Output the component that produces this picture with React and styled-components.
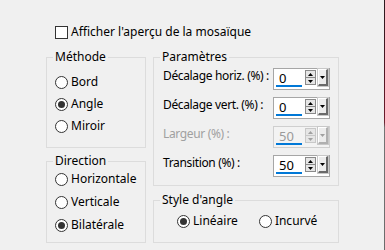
import styled, { createGlobalStyle } from 'styled-components';

const GlobalStyle = createGlobalStyle`
  html, body {
    margin: 0;
    padding: 0;
    background: #f0f0f0;
  }
  body {
    font-family: "Noto Sans", "Open Sans", sans-serif;
    font-size: 12px;
    line-height: 16px;
    color: #000;
  }
`;

const Page = styled.div`
  display: flex;
  width: 385px;
  height: 250px;
  overflow: hidden;
`;

const Dialog = styled.div`
  width: 384px;
  padding: 24px 0 0 46px;
  box-sizing: border-box;
`;

// thin slice of the window behind, visible at the right edge
const EdgeStrip = styled.div`
  width: 1px;
  background: linear-gradient(to bottom, #2a1a1e 0, #4e1622 28%, #6a1b2b 46%, #6d2733 49%, #747474 51%, #6c6c6c 100%);
`;

const CheckRow = styled.label`
  display: flex;
  align-items: center;
  gap: 3px;
  padding-left: 9px;
  height: 16px;
  margin-bottom: 9px;
`;

const CheckBox = styled.span`
  width: 13px;
  height: 13px;
  box-sizing: border-box;
  border: 1px solid #333;
  background: #fff;
`;

const Columns = styled.div`
  display: flex;
  gap: 7px;
  align-items: flex-start;
`;

const Column = styled.div`
  display: flex;
  flex-direction: column;
  gap: ${p => p.$gap}px;
  width: ${p => p.$width}px;
`;

const Group = styled.fieldset`
  margin: 0;
  padding: 0;
  border: 1px solid #dcdcdc;
  min-width: 0;
`;

const Legend = styled.legend`
  margin-left: 6px;
  padding: 0 2px;
  line-height: 16px;
`;

const GroupBody = styled.div`
  display: flex;
  flex-direction: ${p => (p.$row ? 'row' : 'column')};
  gap: ${p => p.$gap || 0}px;
  padding: ${p => p.$pad};
`;

const Option = styled.label`
  display: flex;
  align-items: center;
  gap: 3px;
  height: 16px;
  white-space: nowrap;
`;

const RadioCircle = styled.span`
  width: 13px;
  height: 13px;
  box-sizing: border-box;
  border: 1px solid #333;
  border-radius: 50%;
  background: #fff;
  display: grid;
  place-items: center;
`;

const RadioDot = styled.span`
  width: 7px;
  height: 7px;
  border-radius: 50%;
  background: #333;
`;

const Radio = ({ label, checked }) => (
  <Option>
    <RadioCircle>{checked && <RadioDot />}</RadioCircle>
    {label}
  </Option>
);

const FieldRow = styled.div`
  display: flex;
  justify-content: space-between;
  align-items: flex-start;
  height: 22px;
`;

const FieldLabel = styled.span`
  white-space: nowrap;
  letter-spacing: -0.35px;
  color: ${p => (p.$disabled ? '#a0a0a0' : '#000')};
`;

const SpinBox = styled.div`
  width: 57px;
  height: 22px;
  flex-shrink: 0;
  box-sizing: border-box;
  border: 1px solid ${p => (p.$disabled ? '#cfcfcf' : '#a6a6a6')};
  background: ${p => (p.$disabled ? '#f3f3f3' : '#fff')};
  display: flex;
  align-items: flex-start;
  padding: 0 1px 0 2px;
`;

const SpinValue = styled.div`
  width: 27px;
  height: 17px;
  padding-left: 3px;
  margin-top: 1px;
  box-sizing: border-box;
  border-bottom: 2px solid #0078d7;
  line-height: 16px;
  font-size: 13px;
  color: ${p => (p.$disabled ? '#9a9a9a' : '#000')};
`;

const Arrows = styled.div`
  display: flex;
  flex-direction: column;
  margin: 1px 0 0 3px;
`;

const ArrowButton = styled.div`
  width: 11px;
  height: 8px;
  box-sizing: border-box;
  border: 1px solid ${p => (p.$disabled ? '#c8c8c8' : '#8a8a8a')};
  background: #e6e6e6;
  display: grid;
  place-items: center;
  & + & {
    margin-top: -1px;
  }
`;

const DropButton = styled.div`
  width: 10px;
  height: 17px;
  margin-left: 2px;
  box-sizing: border-box;
  border-top: 1px solid #fff;
  border-left: 1px solid #fff;
  border-right: 2px solid ${p => (p.$disabled ? '#b0b0b0' : '#6a6a6a')};
  border-bottom: 2px solid ${p => (p.$disabled ? '#b0b0b0' : '#6a6a6a')};
  outline: 1px solid #c8c8c8;
  background: #ececec;
  display: grid;
  place-items: center;
`;

const Tri = ({ down, color }) => (
  <svg width="5" height="3" viewBox="0 0 5 3">
    <path d={down ? 'M0 0H5L2.5 3Z' : 'M0 3H5L2.5 0Z'} fill={color} />
  </svg>
);

const Spin = ({ value, disabled }) => {
  const c = disabled ? '#a0a0a0' : '#000';
  return (
    <SpinBox $disabled={disabled}>
      <SpinValue $disabled={disabled}>{value}</SpinValue>
      <Arrows>
        <ArrowButton $disabled={disabled}><Tri color={c} /></ArrowButton>
        <ArrowButton $disabled={disabled}><Tri down color={c} /></ArrowButton>
      </Arrows>
      <DropButton $disabled={disabled}><Tri down color={c} /></DropButton>
    </SpinBox>
  );
};

const params = [
  { label: 'Décalage horiz. (%) :', value: '0' },
  { label: 'Décalage vert. (%) :', value: '0' },
  { label: 'Largeur (%) :', value: '50', disabled: true },
  { label: 'Transition (%) :', value: '50' },
];

export default function App() {
  return (
    <Page>
      <GlobalStyle />
      <Dialog>
        <CheckRow>
          <CheckBox />
          Afficher l'aperçu de la mosaïque
        </CheckRow>
        <Columns>
          <Column $width={100} $gap={5}>
            <Group>
              <Legend>Méthode</Legend>
              <GroupBody $pad="9px 0 13px 8px" $gap={6}>
                <Radio label="Bord" />
                <Radio label="Angle" checked />
                <Radio label="Miroir" />
              </GroupBody>
            </Group>
            <Group>
              <Legend>Direction</Legend>
              <GroupBody $pad="2px 0 9px 8px" $gap={7}>
                <Radio label="Horizontale" />
                <Radio label="Verticale" />
                <Radio label="Bilatérale" checked />
              </GroupBody>
            </Group>
          </Column>
          <Column $width={186} $gap={6}>
            <Group>
              <Legend>Paramètres</Legend>
              <GroupBody $pad="3px 8px 8px 9px" $gap={7}>
                {params.map(p => (
                  <FieldRow key={p.label}>
                    <FieldLabel $disabled={p.disabled}>{p.label}</FieldLabel>
                    <Spin value={p.value} disabled={p.disabled} />
                  </FieldRow>
                ))}
              </GroupBody>
            </Group>
            <Group>
              <Legend>Style d'angle</Legend>
              <GroupBody $pad="5px 0 13px 23px" $gap={21} $row>
                <Radio label="Linéaire" checked />
                <Radio label="Incurvé" />
              </GroupBody>
            </Group>
          </Column>
        </Columns>
      </Dialog>
      <EdgeStrip />
    </Page>
  );
}
